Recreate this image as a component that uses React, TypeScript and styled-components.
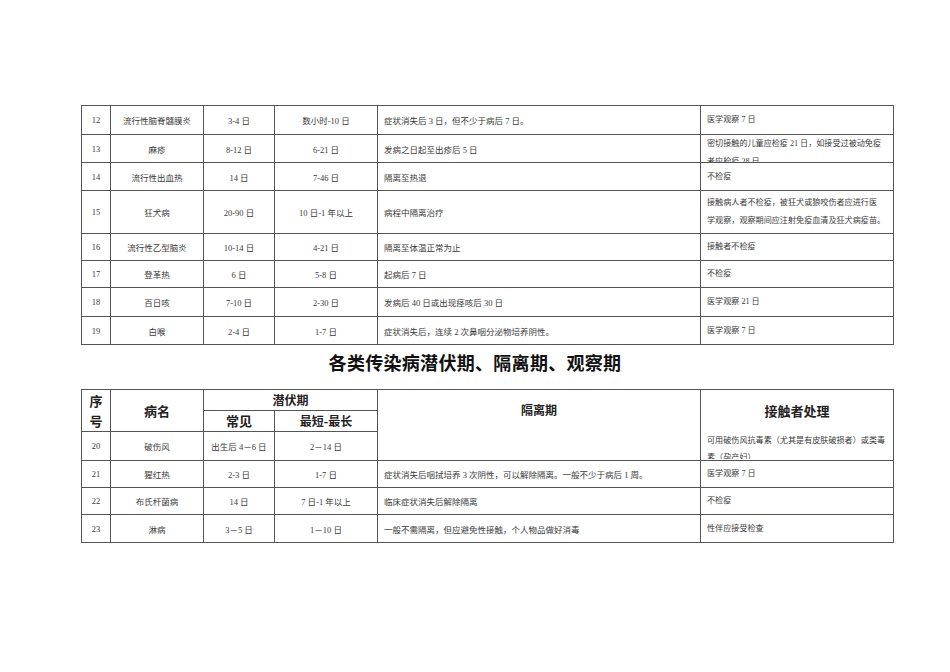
import React from 'react';
import styled, { createGlobalStyle } from 'styled-components';

const GlobalStyle = createGlobalStyle`
  html, body {
    margin: 0;
    padding: 0;
    background: #ffffff;
  }
  body {
    font-family: "Liberation Serif", "Noto Sans CJK SC", serif;
    color: #333;
  }
`;

type Row = {
  no: string;
  name: string;
  common: string;
  range: string;
  isolate: string;
  contact: string[];
  h: number;
};

const topRows: Row[] = [
  { no: '12', name: '流行性脑脊髓膜炎', common: '3-4 日', range: '数小时-10 日', isolate: '症状消失后 3 日，但不少于病后 7 日。', contact: ['医学观察 7 日'], h: 29 },
  { no: '13', name: '麻疹', common: '8-12 日', range: '6-21 日', isolate: '发病之日起至出疹后 5 日', contact: ['密切接触的儿童应检疫 21 日，如接受过被动免疫', '者应检疫 28 日'], h: 28 },
  { no: '14', name: '流行性出血热', common: '14 日', range: '7-46 日', isolate: '隔离至热退', contact: ['不检疫'], h: 28 },
  { no: '15', name: '狂犬病', common: '20-90 日', range: '10 日-1 年以上', isolate: '病程中隔离治疗', contact: ['接触病人者不检疫，被狂犬或狼咬伤者应进行医', '学观察，观察期间应注射免疫血清及狂犬病疫苗。'], h: 43 },
  { no: '16', name: '流行性乙型脑炎', common: '10-14 日', range: '4-21 日', isolate: '隔离至体温正常为止', contact: ['接触者不检疫'], h: 27 },
  { no: '17', name: '登革热', common: '6 日', range: '5-8 日', isolate: '起病后 7 日', contact: ['不检疫'], h: 27 },
  { no: '18', name: '百日咳', common: '7-10 日', range: '2-30 日', isolate: '发病后 40 日或出现痉咳后 30 日', contact: ['医学观察 21 日'], h: 29 },
  { no: '19', name: '白喉', common: '2-4 日', range: '1-7 日', isolate: '症状消失后，连续 2 次鼻咽分泌物培养阴性。', contact: ['医学观察 7 日'], h: 28 },
];

const bottomRows: Row[] = [
  { no: '21', name: '猩红热', common: '2-3 日', range: '1-7 日', isolate: '症状消失后咽拭培养 3 次阴性，可以解除隔离。一般不少于病后 1 周。', contact: ['医学观察 7 日'], h: 27 },
  { no: '22', name: '布氏杆菌病', common: '14 日', range: '7 日-1 年以上', isolate: '临床症状消失后解除隔离', contact: ['不检疫'], h: 27 },
  { no: '23', name: '淋病', common: '3－5 日', range: '1－10 日', isolate: '一般不需隔离，但应避免性接触，个人物品做好消毒', contact: ['性伴应接受检查'], h: 28 },
];

const Page = styled.div`
  width: 950px;
  min-height: 672px;
  padding-top: 105px;
  box-sizing: border-box;
  display: flex;
  flex-direction: column;
  align-items: flex-start;
`;

const Table = styled.table`
  width: 812px;
  margin-left: 81px;
  border-collapse: collapse;
  table-layout: fixed;
`;

const Cell = styled.td<{ $left?: boolean }>`
  border: 1px solid #555;
  padding: ${(p) => (p.$left ? '0 2px 0 6px' : '0 2px')};
  text-align: ${(p) => (p.$left ? 'left' : 'center')};
  vertical-align: middle;
  font-size: 8.5px;
  color: #3a3a3a;
  overflow: hidden;
`;

const Clip = styled.div<{ $h: number }>`
  max-height: ${(p) => p.$h}px;
  overflow: hidden;
  line-height: 18px;
  font-size: 8.1px;
  white-space: nowrap;
`;

const Head = styled.th<{ $size?: number }>`
  border: 1px solid #555;
  padding: 0;
  font-family: "Noto Sans CJK SC", sans-serif;
  font-weight: 700;
  font-size: ${(p) => p.$size ?? 12}px;
  color: #222;
  text-align: center;
  vertical-align: middle;
  line-height: 20px;
`;

const Title = styled.h1`
  align-self: center;
  margin: 5px 0 15px;
  font-family: "Noto Sans CJK SC", sans-serif;
  font-weight: 700;
  font-size: 18px;
  line-height: 24px;
  color: #111;
  letter-spacing: 0.3px;
`;

const ContactCell = styled.th`
  border: 1px solid #555;
  padding: 0;
  vertical-align: top;
  font-weight: 400;
  text-align: left;
`;

const ContactTitle = styled.div`
  height: 40px;
  display: flex;
  align-items: center;
  justify-content: center;
  font-family: "Noto Sans CJK SC", sans-serif;
  font-weight: 700;
  font-size: 13px;
  color: #222;
`;

const ContactText = styled.div`
  height: 29px;
  overflow: hidden;
  padding: 2px 2px 0 6px;
  box-sizing: border-box;
  font-size: 8.1px;
  line-height: 17px;
  color: #3a3a3a;
  white-space: nowrap;
`;

function Cols() {
  return (
    <colgroup>
      <col style={{ width: 29 }} />
      <col style={{ width: 93 }} />
      <col style={{ width: 71 }} />
      <col style={{ width: 103 }} />
      <col style={{ width: 323 }} />
      <col style={{ width: 193 }} />
    </colgroup>
  );
}

function BodyRow({ r }: { r: Row }) {
  return (
    <tr style={{ height: r.h }}>
      <Cell>{r.no}</Cell>
      <Cell>{r.name}</Cell>
      <Cell>{r.common}</Cell>
      <Cell>{r.range}</Cell>
      <Cell $left>{r.isolate}</Cell>
      <Cell $left>
        <Clip $h={r.h - 1}>
          {r.contact.map((line, i) => (
            <div key={i}>{line}</div>
          ))}
        </Clip>
      </Cell>
    </tr>
  );
}

export default function App() {
  return (
    <>
      <GlobalStyle />
      <Page>
        <Table>
          <Cols />
          <tbody>
            {topRows.map((r) => (
              <BodyRow key={r.no} r={r} />
            ))}
          </tbody>
        </Table>

        <Title>各类传染病潜伏期、隔离期、观察期</Title>

        <Table>
          <Cols />
          <tbody>
            <tr style={{ height: 19 }}>
              <Head rowSpan={2} $size={13}>
                序<br />号
              </Head>
              <Head rowSpan={2} $size={13}>病名</Head>
              <Head colSpan={2} $size={12}>潜伏期</Head>
              <Head rowSpan={3} $size={12} style={{ verticalAlign: 'top', paddingTop: 10 }}>
                隔离期
              </Head>
              <ContactCell rowSpan={3}>
                <ContactTitle>接触者处理</ContactTitle>
                <ContactText>
                  <div>可用破伤风抗毒素（尤其是有皮肤破损者）或类毒</div>
                  <div>素（孕产妇）</div>
                </ContactText>
              </ContactCell>
            </tr>
            <tr style={{ height: 21 }}>
              <Head $size={13}>常见</Head>
              <Head $size={12}>最短-最长</Head>
            </tr>
            <tr style={{ height: 29 }}>
              <Cell>20</Cell>
              <Cell>破伤风</Cell>
              <Cell>出生后 4－6 日</Cell>
              <Cell>2－14 日</Cell>
            </tr>
            {bottomRows.map((r) => (
              <BodyRow key={r.no} r={r} />
            ))}
          </tbody>
        </Table>
      </Page>
    </>
  );
}
